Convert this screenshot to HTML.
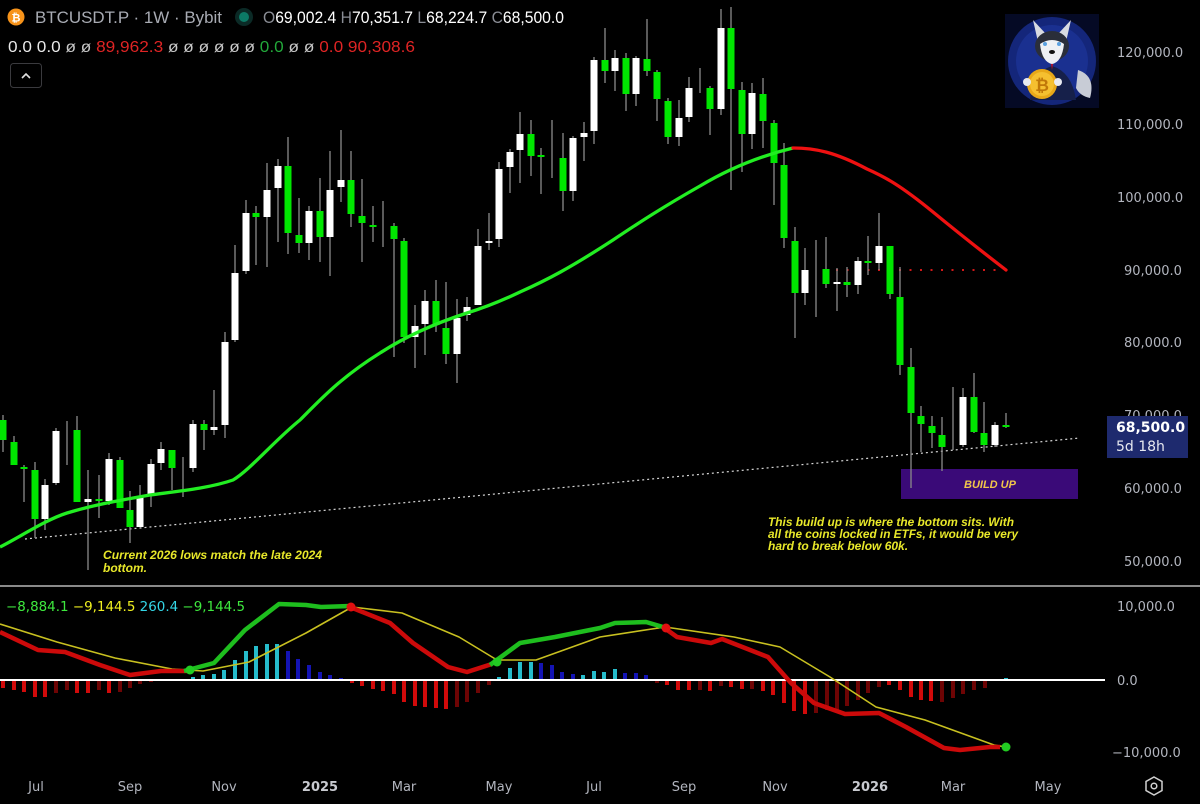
<!DOCTYPE html>
<html><head><meta charset="utf-8"><style>
html,body{margin:0;padding:0;background:#000;}
svg{display:block;}
.ax{font-family:"DejaVu Sans","Liberation Sans",sans-serif;font-size:13px;fill:#b2b5be;}
.an{font-family:"Liberation Sans",sans-serif;font-size:12px;font-style:italic;font-weight:bold;fill:#e8e82a;}
</style></head><body>
<svg width="1200" height="804" viewBox="0 0 1200 804" xmlns="http://www.w3.org/2000/svg">
<rect width="1200" height="804" fill="#000"/>

<!-- header -->
<circle cx="16" cy="17" r="8.5" fill="#f7931a"/>
<text x="16" y="21.5" text-anchor="middle" font-family="Liberation Sans,sans-serif" font-size="11" font-weight="bold" fill="#fff">₿</text>
<text x="35" y="23" font-family="Liberation Sans,sans-serif" font-size="17" fill="#a8abb3" textLength="187" lengthAdjust="spacingAndGlyphs">BTCUSDT.P · 1W · Bybit</text>
<circle cx="244" cy="17" r="9" fill="#0b2a26"/>
<circle cx="244" cy="17" r="5" fill="#0c7a66"/>
<text x="263" y="23" font-family="Liberation Sans,sans-serif" font-size="17" fill="#fff" textLength="301" lengthAdjust="spacingAndGlyphs"><tspan fill="#8a8d95">O</tspan>69,002.4 <tspan fill="#8a8d95">H</tspan>70,351.7 <tspan fill="#8a8d95">L</tspan>68,224.7 <tspan fill="#8a8d95">C</tspan>68,500.0</text>
<text x="8" y="52" font-family="Liberation Sans,sans-serif" font-size="16" fill="#e8e8e8" textLength="407" lengthAdjust="spacingAndGlyphs">0.0 0.0 <tspan fill="#c8c8c8">ø ø</tspan> <tspan fill="#e02424">89,962.3</tspan> <tspan fill="#c8c8c8">ø ø ø ø ø ø</tspan> <tspan fill="#22a83a">0.0</tspan> <tspan fill="#c8c8c8">ø ø</tspan> <tspan fill="#e02424">0.0 90,308.6</tspan></text>
<rect x="10.5" y="63.5" width="31" height="24" rx="3" fill="#000" stroke="#3a3a3e"/>
<path d="M22 78 L26 74 L30 78" stroke="#e0e0e0" stroke-width="1.6" fill="none"/>

<!-- avatar -->
<rect x="1005" y="14" width="94" height="94" fill="#050a25"/>
<circle cx="1052" cy="61" r="44" fill="#14267a"/>
<circle cx="1052" cy="61" r="36" fill="#1a3090"/>
<path d="M1030 100 Q1032 72 1052 66 Q1072 72 1076 100 Z" fill="#16204a"/>
<path d="M1078 70 Q1096 76 1090 98 Q1080 96 1076 88 Z" fill="#c8ccd6"/>
<path d="M1033 20 L1038 42 L1046 34 Z" fill="#d8dbe2"/>
<path d="M1071 20 L1066 42 L1058 34 Z" fill="#d8dbe2"/>
<ellipse cx="1052" cy="46" rx="17" ry="15" fill="#2a2e3a"/>
<path d="M1040 44 Q1052 36 1064 44 Q1062 62 1052 64 Q1042 62 1040 44 Z" fill="#eef0f4"/>
<circle cx="1045" cy="44" r="2" fill="#5aa0e0"/><circle cx="1059" cy="44" r="2" fill="#5aa0e0"/>
<ellipse cx="1052" cy="52" rx="3" ry="2" fill="#111"/>
<path d="M1051 64 L1053 64 L1052 70 Z" fill="#c01020"/>
<circle cx="1042" cy="84" r="15" fill="#e8a818"/>
<circle cx="1042" cy="84" r="12" fill="#f5c030"/>
<text x="1042" y="91" text-anchor="middle" font-family="Liberation Sans,sans-serif" font-size="17" font-weight="bold" fill="#c07808">₿</text>
<circle cx="1027" cy="82" r="4" fill="#e8eaf0"/><circle cx="1058" cy="82" r="4" fill="#e8eaf0"/>

<!-- price axis -->
<g class="ax">
<text x="1117" y="57">120,000.0</text>
<text x="1117" y="129">110,000.0</text>
<text x="1117" y="202">100,000.0</text>
<text x="1124" y="275">90,000.0</text>
<text x="1124" y="347">80,000.0</text>
<text x="1124" y="420">70,000.0</text>
<text x="1124" y="493">60,000.0</text>
<text x="1124" y="566">50,000.0</text>
</g>

<line x1="25" y1="539" x2="1080" y2="438" stroke="#d8d8d8" stroke-width="1.2" stroke-dasharray="2 3"/>
<line x1="836" y1="270" x2="1004" y2="270" stroke="#d01818" stroke-width="2" stroke-dasharray="2 8.5"/>

<rect x="901" y="469" width="177" height="30" fill="#3a0a78"/>
<text x="990" y="488" text-anchor="middle" font-family="Liberation Sans,sans-serif" font-size="11" font-style="italic" font-weight="bold" fill="#f2c64a">BUILD UP</text>

<!-- candles -->
<g stroke="#8a8a8a" stroke-width="1.3">
<line x1="3" y1="415" x2="3" y2="452"/><line x1="14" y1="436" x2="14" y2="465"/><line x1="24" y1="465" x2="24" y2="502"/><line x1="35" y1="462" x2="35" y2="538"/><line x1="45" y1="479" x2="45" y2="530"/><line x1="56" y1="428" x2="56" y2="485"/><line x1="67" y1="421" x2="67" y2="465"/><line x1="77" y1="416" x2="77" y2="502"/><line x1="88" y1="470" x2="88" y2="570"/><line x1="99" y1="475" x2="99" y2="518"/><line x1="109" y1="453" x2="109" y2="505"/><line x1="120" y1="457" x2="120" y2="508"/><line x1="130" y1="491" x2="130" y2="543"/><line x1="140" y1="485" x2="140" y2="527"/><line x1="151" y1="459" x2="151" y2="507"/><line x1="161" y1="442" x2="161" y2="470"/><line x1="172" y1="450" x2="172" y2="490"/><line x1="183" y1="457" x2="183" y2="497"/><line x1="193" y1="420" x2="193" y2="472"/><line x1="204" y1="420" x2="204" y2="450"/><line x1="214" y1="390" x2="214" y2="435"/><line x1="225" y1="332" x2="225" y2="438"/><line x1="235" y1="245" x2="235" y2="342"/><line x1="246" y1="200" x2="246" y2="274"/><line x1="256" y1="206" x2="256" y2="265"/><line x1="267" y1="163" x2="267" y2="267"/><line x1="278" y1="159" x2="278" y2="242"/><line x1="288" y1="137" x2="288" y2="254"/><line x1="299" y1="198" x2="299" y2="253"/><line x1="309" y1="206" x2="309" y2="260"/><line x1="320" y1="178" x2="320" y2="262"/><line x1="330" y1="151" x2="330" y2="276"/><line x1="341" y1="130" x2="341" y2="202"/><line x1="351" y1="151" x2="351" y2="227"/><line x1="362" y1="179" x2="362" y2="262"/><line x1="373" y1="206" x2="373" y2="242"/><line x1="383" y1="201" x2="383" y2="247"/><line x1="394" y1="223" x2="394" y2="357"/><line x1="404" y1="238" x2="404" y2="343"/><line x1="415" y1="305" x2="415" y2="368"/>
<line x1="425" y1="290" x2="425" y2="355"/><line x1="436" y1="280" x2="436" y2="332"/><line x1="446" y1="282" x2="446" y2="364"/><line x1="457" y1="299" x2="457" y2="383"/><line x1="467" y1="297" x2="467" y2="321"/><line x1="478" y1="229" x2="478" y2="305"/><line x1="489" y1="213" x2="489" y2="250"/><line x1="499" y1="162" x2="499" y2="247"/><line x1="510" y1="149" x2="510" y2="193"/><line x1="520" y1="112" x2="520" y2="183"/><line x1="531" y1="120" x2="531" y2="176"/><line x1="541" y1="148" x2="541" y2="194"/><line x1="552" y1="120" x2="552" y2="178"/><line x1="563" y1="133" x2="563" y2="211"/><line x1="573" y1="136" x2="573" y2="201"/><line x1="584" y1="122" x2="584" y2="161"/><line x1="594" y1="57" x2="594" y2="144"/><line x1="605" y1="28" x2="605" y2="83"/><line x1="615" y1="50" x2="615" y2="91"/><line x1="626" y1="53" x2="626" y2="111"/><line x1="636" y1="56" x2="636" y2="106"/><line x1="647" y1="19" x2="647" y2="76"/><line x1="657" y1="70" x2="657" y2="121"/><line x1="668" y1="98" x2="668" y2="144"/><line x1="679" y1="100" x2="679" y2="146"/><line x1="689" y1="77" x2="689" y2="122"/><line x1="700" y1="68" x2="700" y2="93"/><line x1="710" y1="86" x2="710" y2="135"/><line x1="721" y1="9" x2="721" y2="115"/><line x1="731" y1="7" x2="731" y2="190"/><line x1="742" y1="82" x2="742" y2="172"/><line x1="752" y1="83" x2="752" y2="149"/><line x1="763" y1="78" x2="763" y2="148"/><line x1="774" y1="120" x2="774" y2="205"/><line x1="784" y1="143" x2="784" y2="248"/><line x1="795" y1="227" x2="795" y2="338"/><line x1="805" y1="248" x2="805" y2="305"/><line x1="816" y1="240" x2="816" y2="317"/><line x1="826" y1="237" x2="826" y2="288"/><line x1="837" y1="268" x2="837" y2="311"/><line x1="847" y1="267" x2="847" y2="297"/><line x1="858" y1="257" x2="858" y2="294"/><line x1="868" y1="236" x2="868" y2="275"/><line x1="879" y1="213" x2="879" y2="270"/><line x1="890" y1="246" x2="890" y2="299"/><line x1="900" y1="267" x2="900" y2="375"/><line x1="911" y1="348" x2="911" y2="488"/><line x1="921" y1="406" x2="921" y2="452"/><line x1="932" y1="416" x2="932" y2="448"/><line x1="942" y1="417" x2="942" y2="471"/><line x1="953" y1="387" x2="953" y2="450"/><line x1="963" y1="388" x2="963" y2="447"/><line x1="974" y1="373" x2="974" y2="433"/><line x1="984" y1="402" x2="984" y2="452"/><line x1="995" y1="422" x2="995" y2="447"/><line x1="1006" y1="413" x2="1006" y2="428"/>
</g>
<g fill="#00e600">
<rect x="-0.5" y="420" width="7" height="20"/><rect x="10.5" y="442" width="7" height="23"/><rect x="20.5" y="467" width="7" height="2"/><rect x="31.5" y="470" width="7" height="49"/><rect x="73.5" y="430" width="7" height="72"/><rect x="95.5" y="499" width="7" height="2"/><rect x="116.5" y="460" width="7" height="48"/><rect x="126.5" y="510" width="7" height="17"/><rect x="168.5" y="450" width="7" height="18"/><rect x="200.5" y="424" width="7" height="6"/><rect x="252.5" y="213" width="7" height="4"/><rect x="284.5" y="166" width="7" height="67"/><rect x="295.5" y="235" width="7" height="8"/><rect x="316.5" y="211" width="7" height="26"/><rect x="347.5" y="180" width="7" height="34"/><rect x="358.5" y="216" width="7" height="7"/><rect x="369.5" y="225" width="7" height="2"/><rect x="390.5" y="226" width="7" height="13"/><rect x="400.5" y="241" width="7" height="96"/>
<rect x="432.5" y="301" width="7" height="24"/><rect x="442.5" y="328" width="7" height="26"/><rect x="527.5" y="134" width="7" height="22"/><rect x="537.5" y="155" width="7" height="2"/><rect x="559.5" y="158" width="7" height="33"/><rect x="601.5" y="60" width="7" height="11"/><rect x="622.5" y="58" width="7" height="36"/><rect x="643.5" y="59" width="7" height="12"/><rect x="653.5" y="72" width="7" height="27"/><rect x="664.5" y="101" width="7" height="36"/><rect x="706.5" y="88" width="7" height="21"/><rect x="727.5" y="28" width="7" height="61"/><rect x="738.5" y="90" width="7" height="44"/><rect x="759.5" y="94" width="7" height="27"/><rect x="770.5" y="123" width="7" height="40"/><rect x="780.5" y="165" width="7" height="73"/><rect x="791.5" y="241" width="7" height="52"/><rect x="822.5" y="269" width="7" height="15"/><rect x="843.5" y="282" width="7" height="3"/><rect x="864.5" y="261" width="7" height="2"/><rect x="886.5" y="246" width="7" height="48"/><rect x="896.5" y="297" width="7" height="68"/><rect x="907.5" y="367" width="7" height="46"/><rect x="917.5" y="416" width="7" height="8"/><rect x="928.5" y="426" width="7" height="7"/><rect x="938.5" y="435" width="7" height="12"/><rect x="970.5" y="397" width="7" height="35"/><rect x="980.5" y="433" width="7" height="12"/><rect x="1002.5" y="425" width="7" height="2"/>
</g>
<g fill="#ffffff">
<rect x="41.5" y="485" width="7" height="34"/><rect x="52.5" y="431" width="7" height="52"/><rect x="84.5" y="499" width="7" height="3"/><rect x="105.5" y="459" width="7" height="42"/><rect x="136.5" y="497" width="7" height="30"/><rect x="147.5" y="464" width="7" height="31"/><rect x="157.5" y="449" width="7" height="14"/><rect x="189.5" y="424" width="7" height="44"/><rect x="210.5" y="427" width="7" height="3"/><rect x="221.5" y="342" width="7" height="83"/><rect x="231.5" y="273" width="7" height="67"/><rect x="242.5" y="213" width="7" height="58"/><rect x="263.5" y="190" width="7" height="27"/><rect x="274.5" y="166" width="7" height="22"/><rect x="305.5" y="211" width="7" height="32"/><rect x="326.5" y="190" width="7" height="47"/><rect x="337.5" y="180" width="7" height="7"/><rect x="411.5" y="326" width="7" height="11"/>
<rect x="421.5" y="301" width="7" height="23"/><rect x="453.5" y="318" width="7" height="36"/><rect x="463.5" y="307" width="7" height="8"/><rect x="474.5" y="246" width="7" height="59"/><rect x="485.5" y="241" width="7" height="2"/><rect x="495.5" y="169" width="7" height="70"/><rect x="506.5" y="152" width="7" height="15"/><rect x="516.5" y="134" width="7" height="16"/><rect x="569.5" y="138" width="7" height="53"/><rect x="580.5" y="133" width="7" height="4"/><rect x="590.5" y="60" width="7" height="71"/><rect x="611.5" y="58" width="7" height="13"/><rect x="632.5" y="58" width="7" height="36"/><rect x="675.5" y="118" width="7" height="19"/><rect x="685.5" y="88" width="7" height="29"/><rect x="717.5" y="28" width="7" height="81"/><rect x="748.5" y="93" width="7" height="41"/><rect x="801.5" y="270" width="7" height="23"/><rect x="833.5" y="282" width="7" height="2"/><rect x="854.5" y="261" width="7" height="24"/><rect x="875.5" y="246" width="7" height="17"/><rect x="959.5" y="397" width="7" height="48"/><rect x="991.5" y="425" width="7" height="20"/>
</g>

<!-- MA -->
<path d="M0 547 C20 537 45 520 67 513 C90 506 110 502 150 495 C180 491 210 488 233 480 C250 470 275 440 300 420 C320 400 340 378 380 353 C400 340 430 325 467 313 C480 309 497 303 520 292 C547 280 570 268 613 240 C640 222 663 207 700 186 C730 168 760 156 793 148" stroke="#22ee22" stroke-width="3.3" fill="none" stroke-linejoin="round"/>
<path d="M793 148 C815 148 835 152 867 169 C885 177 900 185 933 212 C950 226 967 240 1006 270" stroke="#ee1111" stroke-width="3.3" fill="none" stroke-linejoin="round" stroke-linecap="round"/>

<rect x="1107" y="416" width="81" height="42" fill="#1e2a6e"/>
<text x="1116" y="432" font-family="DejaVu Sans,sans-serif" font-size="14" font-weight="bold" fill="#fff">68,500.0</text>
<text x="1116" y="451" font-family="DejaVu Sans,sans-serif" font-size="14" fill="#e6e8f0">5d 18h</text>

<text class="an" x="103" y="559" textLength="219" lengthAdjust="spacingAndGlyphs">Current 2026 lows match the late 2024</text>
<text class="an" x="103" y="572">bottom.</text>
<text class="an" x="768" y="526" textLength="246" lengthAdjust="spacingAndGlyphs">This build up is where the bottom sits. With</text>
<text class="an" x="768" y="538" textLength="250" lengthAdjust="spacingAndGlyphs">all the coins locked in ETFs, it would be very</text>
<text class="an" x="768" y="550">hard to break below 60k.</text>

<rect x="0" y="585" width="1200" height="2" fill="#8a8a8a"/>

<text x="6" y="611" font-family="DejaVu Sans,sans-serif" font-size="13" textLength="239" lengthAdjust="spacingAndGlyphs"><tspan fill="#3ee83e">−8,884.1</tspan> <tspan fill="#f0f020">−9,144.5</tspan> <tspan fill="#34d6e6">260.4</tspan> <tspan fill="#3ee83e">−9,144.5</tspan></text>
<g class="ax">
<text x="1117" y="611">10,000.0</text>
<text x="1117" y="685">0.0</text>
<text x="1112" y="757">−10,000.0</text>
</g>

<g fill="#d10a0a">
<rect x="1" y="680" width="4" height="8"/><rect x="12" y="680" width="4" height="10"/><rect x="22" y="680" width="4" height="12"/><rect x="33" y="680" width="4" height="17"/><rect x="43" y="680" width="4" height="17"/><rect x="75" y="680" width="4" height="13"/><rect x="86" y="680" width="4" height="13"/><rect x="107" y="680" width="4" height="13"/>
<rect x="350" y="680" width="4" height="3"/><rect x="360" y="680" width="4" height="6"/><rect x="371" y="680" width="4" height="9"/><rect x="381" y="680" width="4" height="11"/><rect x="392" y="680" width="4" height="14"/><rect x="402" y="680" width="4" height="22"/><rect x="413" y="680" width="4" height="26"/><rect x="423" y="680" width="4" height="27"/><rect x="434" y="680" width="4" height="28"/><rect x="444" y="680" width="4" height="29"/>
<rect x="665" y="680" width="4" height="5"/><rect x="676" y="680" width="4" height="10"/><rect x="687" y="680" width="4" height="10"/><rect x="708" y="680" width="4" height="11"/><rect x="729" y="680" width="4" height="7"/><rect x="740" y="680" width="4" height="9"/><rect x="761" y="680" width="4" height="11"/><rect x="771" y="680" width="4" height="15"/><rect x="782" y="680" width="4" height="23"/><rect x="792" y="680" width="4" height="31"/><rect x="803" y="680" width="4" height="34"/><rect x="887" y="680" width="4" height="5"/><rect x="898" y="680" width="4" height="10"/><rect x="909" y="680" width="4" height="17"/><rect x="919" y="680" width="4" height="20"/><rect x="929" y="680" width="4" height="21"/>
</g>
<g fill="#6e0404">
<rect x="54" y="680" width="4" height="13"/><rect x="65" y="680" width="4" height="10"/><rect x="97" y="680" width="4" height="10"/><rect x="118" y="680" width="4" height="12"/><rect x="128" y="680" width="4" height="8"/><rect x="138" y="680" width="4" height="4"/><rect x="149" y="680" width="4" height="2"/>
<rect x="455" y="680" width="4" height="27"/><rect x="465" y="680" width="4" height="22"/><rect x="476" y="680" width="4" height="13"/><rect x="487" y="680" width="4" height="5"/>
<rect x="655" y="680" width="4" height="3"/><rect x="698" y="680" width="4" height="10"/><rect x="719" y="680" width="4" height="6"/><rect x="750" y="680" width="4" height="9"/><rect x="814" y="680" width="4" height="33"/><rect x="825" y="680" width="4" height="30"/><rect x="835" y="680" width="4" height="30"/><rect x="845" y="680" width="4" height="26"/><rect x="856" y="680" width="4" height="20"/><rect x="866" y="680" width="4" height="13"/><rect x="877" y="680" width="4" height="7"/><rect x="940" y="680" width="4" height="22"/><rect x="951" y="680" width="4" height="18"/><rect x="961" y="680" width="4" height="14"/><rect x="972" y="680" width="4" height="10"/><rect x="983" y="680" width="4" height="8"/>
</g>
<g fill="#26bccb">
<rect x="191" y="677" width="4" height="3"/><rect x="201" y="675" width="4" height="5"/><rect x="212" y="674" width="4" height="6"/><rect x="222" y="670" width="4" height="10"/><rect x="233" y="660" width="4" height="20"/><rect x="244" y="651" width="4" height="29"/><rect x="254" y="646" width="4" height="34"/><rect x="265" y="644" width="4" height="36"/><rect x="275" y="644" width="4" height="36"/>
<rect x="497" y="677" width="4" height="3"/><rect x="508" y="668" width="4" height="12"/><rect x="518" y="662" width="4" height="18"/><rect x="529" y="662" width="4" height="18"/><rect x="581" y="675" width="4" height="5"/><rect x="592" y="671" width="4" height="9"/><rect x="602" y="672" width="4" height="8"/><rect x="613" y="669" width="4" height="11"/><rect x="1004" y="678" width="4" height="2"/>
</g>
<g fill="#1414b4">
<rect x="286" y="651" width="4" height="29"/><rect x="296" y="659" width="4" height="21"/><rect x="307" y="665" width="4" height="15"/><rect x="318" y="672" width="4" height="8"/><rect x="328" y="675" width="4" height="5"/><rect x="339" y="678" width="4" height="2"/>
<rect x="539" y="663" width="4" height="17"/><rect x="550" y="665" width="4" height="15"/><rect x="560" y="672" width="4" height="8"/><rect x="571" y="674" width="4" height="6"/><rect x="623" y="673" width="4" height="7"/><rect x="634" y="673" width="4" height="7"/><rect x="644" y="675" width="4" height="5"/>
</g>
<line x1="0" y1="680" x2="1105" y2="680" stroke="#ffffff" stroke-width="2"/>

<path d="M0 624 L57 642 L115 658 L172 669 L203 671 L249 662 L306 633 L352 607 L402 613 L459 637 L497 660 L536 660 L600 637 L665 627 L734 637 L780 647 L830 677 L876 707 L925 720 L994 745 L1006 747" stroke="#c8c020" stroke-width="1.6" fill="none" stroke-linejoin="round"/>
<path d="M0 632 L38 650 L65 652 L100 665 L130 675 L161 671 L190 671" stroke="#cc0a0a" stroke-width="4.5" fill="none" stroke-linejoin="round"/>
<path d="M184 671 L214 663 L245 630 L279 604 L306 605 L321 607 L350 606" stroke="#1ebe1e" stroke-width="4.5" fill="none" stroke-linejoin="round"/>
<path d="M350 607 L390 623 L413 643 L448 667 L467 672 L492 664" stroke="#cc0a0a" stroke-width="4.5" fill="none" stroke-linejoin="round"/>
<path d="M490 665 L520 643 L555 637 L600 628 L615 623 L646 622 L663 627" stroke="#1ebe1e" stroke-width="4.5" fill="none" stroke-linejoin="round"/>
<path d="M663 627 L677 637 L711 643 L722 639 L745 648 L768 657 L791 683 L814 703 L845 714 L879 713 L906 727 L944 748 L960 750 L990 747 L1000 747" stroke="#cc0a0a" stroke-width="4.5" fill="none" stroke-linejoin="round"/>
<circle cx="190" cy="670" r="4.5" fill="#22cc22"/>
<circle cx="351" cy="607" r="4.5" fill="#e01010"/>
<circle cx="497" cy="662" r="4.5" fill="#22cc22"/>
<circle cx="666" cy="628" r="4.5" fill="#e01010"/>
<circle cx="1006" cy="747" r="4.5" fill="#22cc22"/>

<g class="ax" text-anchor="middle">
<text x="36" y="791">Jul</text>
<text x="130" y="791">Sep</text>
<text x="224" y="791">Nov</text>
<text x="320" y="791" font-weight="bold" fill="#c8cad0">2025</text>
<text x="404" y="791">Mar</text>
<text x="499" y="791">May</text>
<text x="594" y="791">Jul</text>
<text x="684" y="791">Sep</text>
<text x="775" y="791">Nov</text>
<text x="870" y="791" font-weight="bold" fill="#c8cad0">2026</text>
<text x="953" y="791">Mar</text>
<text x="1048" y="791">May</text>
</g>
<path d="M1154 777 L1162 781.5 L1162 790.5 L1154 795 L1146 790.5 L1146 781.5 Z" stroke="#d0d0d0" stroke-width="1.5" fill="none"/>
<circle cx="1154" cy="786" r="2.8" stroke="#d0d0d0" stroke-width="1.5" fill="none"/>
</svg>
</body></html>
